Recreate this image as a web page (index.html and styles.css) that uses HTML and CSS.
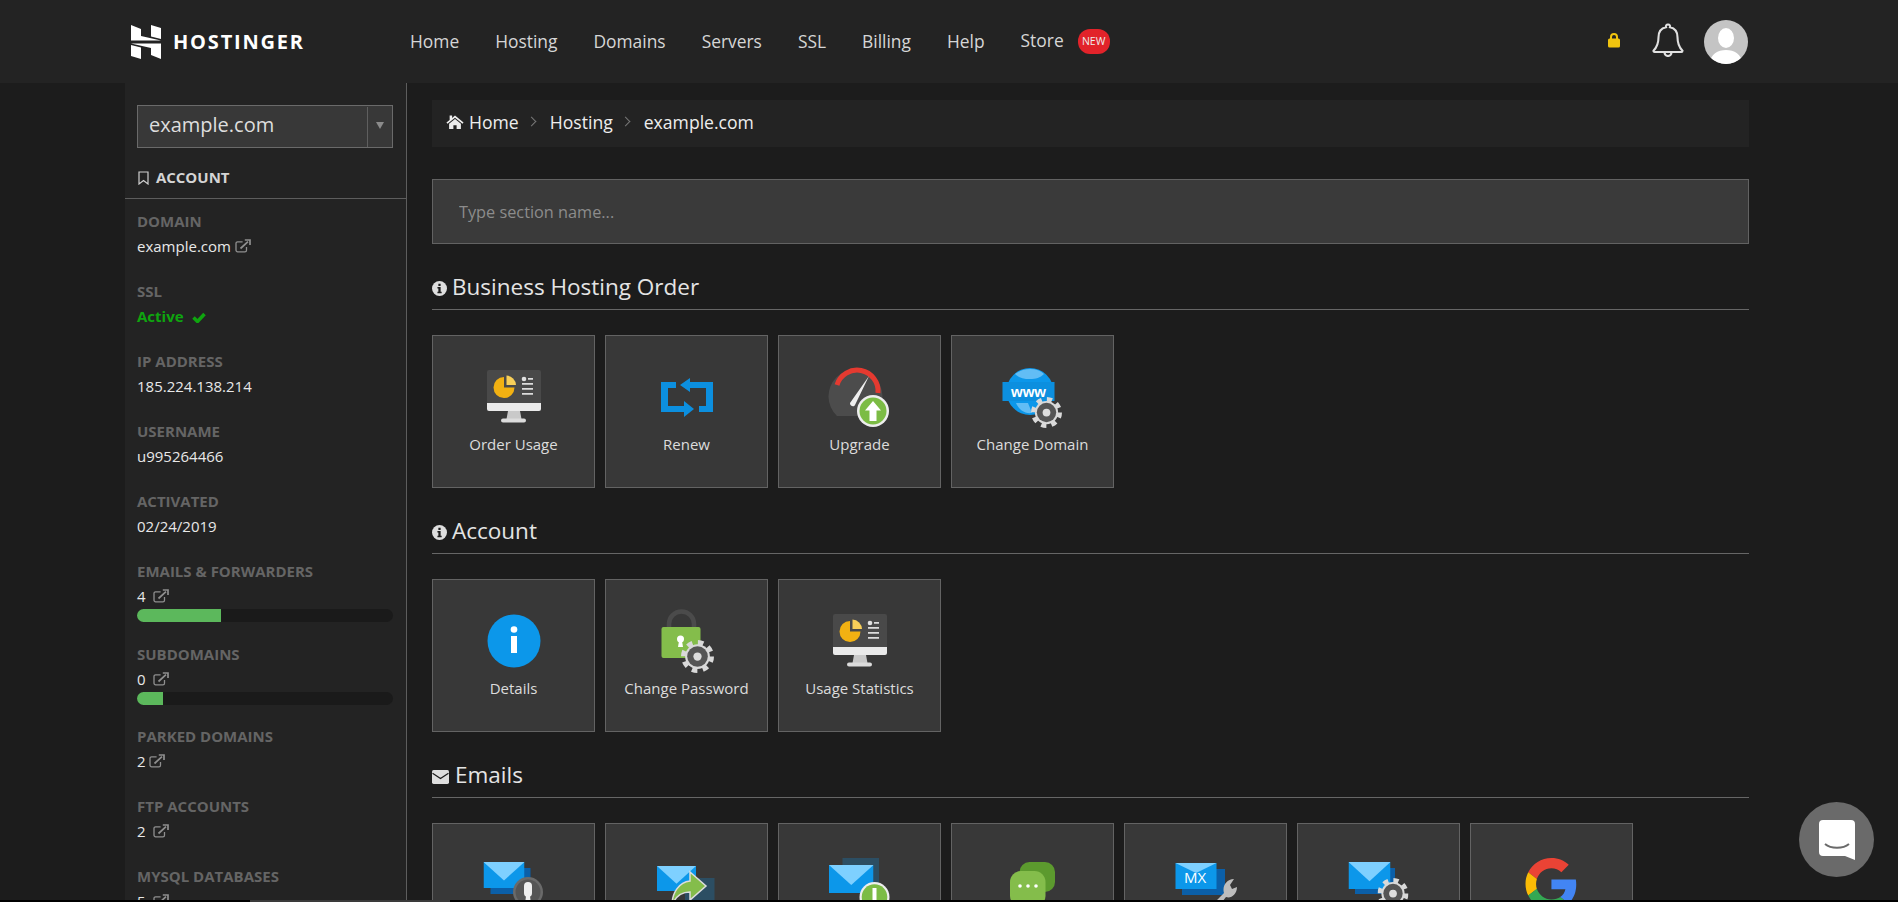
FILE: index.html
```html
<!DOCTYPE html>
<html lang="en">
<head>
  <meta charset="UTF-8">
  <meta name="viewport" content="width=device-width, initial-scale=1.0">
  <title>Hostinger</title>
  <link rel="stylesheet" href="styles.css">
</head>
<body>
  <svg class="defs" width="0" height="0">
    <defs>
      <symbol id="ext" viewBox="0 0 16 14">
        <path d="M11.500 8v3.200a1.600 1.600 0 0 1-1.600 1.600H2.600A1.600 1.600 0 0 1 1 11.200V4.400a1.600 1.600 0 0 1 1.600-1.600h5" fill="none" stroke="currentColor" stroke-width="1.300"/>
        <path d="M5.500 9.500 13 2.600M9.800 1H15v5" fill="none" stroke="currentColor" stroke-width="1.700"/>
      </symbol>
      <symbol id="info" viewBox="0 0 16 16">
        <circle cx="8" cy="8" r="8" fill="#dedede"/>
        <path d="M6.800 3h2.400v2.200H6.800zM5.800 6.500h3.400v5h1.100V13H5.800v-1.500h1V8h-1z" fill="#1c1c1c"/>
      </symbol>
      <symbol id="gear" viewBox="0 0 32 32">
        <circle cx="16" cy="16" r="13.500" fill="none" stroke="#d9d9d9" stroke-width="5" stroke-dasharray="5.300 5.300"/>
        <circle cx="16" cy="16" r="12" fill="#d9d9d9"/>
        <circle cx="16" cy="16" r="10" fill="#555"/>
        <circle cx="16" cy="16" r="4" fill="#dddddd"/>
      </symbol>
      <symbol id="monitor" viewBox="0 0 54 54">
        <path d="M2 0h50a2 2 0 0 1 2 2v32H0V2a2 2 0 0 1 2-2z" fill="#494949"/>
        <path d="M0 33h54v6a2 2 0 0 1-2 2H2a2 2 0 0 1-2-2z" fill="#eaeaea"/>
        <path d="M21 41h12l1.500 8h-15z" fill="#c9c9c9"/>
        <rect x="14" y="48.500" width="25" height="4" rx="2" fill="#dcdcdc"/>
        <path d="M17 7v10.500h10.500A10.500 10.500 0 1 1 17 7z" fill="#f2b112"/>
        <path d="M19.500 5.500a10 10 0 0 1 9.500 9.500h-9.500z" fill="#f8cf59"/>
        <circle cx="37" cy="9" r="2.300" fill="#e0e0e0"/>
        <path d="M41 8h5v1.800h-5zM35 13h11v1.800H35zM35 18h11v1.800H35zM35 23h11v1.800H35z" fill="#dcdcdc"/>
      </symbol>
      <symbol id="mail-front" viewBox="0 0 46 38" preserveAspectRatio="none">
        <rect width="46" height="38" fill="#0c97ea"/>
        <path d="M0 0h46L23 27z" fill="#7ed0ff"/>
      </symbol>
    </defs>
  </svg>

  <header class="topbar">
    <div class="logo">
      <svg class="logo-mark" width="30" height="34" viewBox="0 0 30 34">
        <path d="M0 0 10 4V11L30 15.500H0zM20 0 30 3V14L20 11.500zM30 34 20 30V23L0 18.500H30zM10 34 0 31V20L10 22.500z" fill="#fff"/>
      </svg>
      <span class="logo-text">HOSTINGER</span>
    </div>
    <nav class="nav">
      <a href="#">Home</a>
      <a href="#">Hosting</a>
      <a href="#">Domains</a>
      <a href="#">Servers</a>
      <a href="#">SSL</a>
      <a href="#">Billing</a>
      <a href="#">Help</a>
      <a href="#" class="nav-store"><span class="store-label">Store</span><span class="badge">NEW</span></a>
    </nav>
    <div class="top-right">
      <svg class="lock" width="12" height="15" viewBox="0 0 12 15"><path d="M3 6V4a3 3 0 0 1 6 0v2" fill="none" stroke="#f1c40f" stroke-width="2"/><rect y="5.500" width="12" height="9" rx="1.500" fill="#f1c40f"/></svg>
      <svg class="bell" width="32" height="34" viewBox="0 0 32 34"><path d="M16 1.500a2 2 0 0 1 2 2.800c5 1 7.500 5 7.500 10 0 7 1.500 10 5 13.500 0 .8-.3 1.200-1 1.200H2.500c-.7 0-1-.4-1-1.200 3.500-3.500 5-6.500 5-13.500 0-5 2.500-9 7.500-10a2 2 0 0 1 2-2.800z" fill="none" stroke="#e0e0e0" stroke-width="2.100"/><path d="M12.500 29.500a3.500 3.500 0 0 0 7 0" fill="none" stroke="#e0e0e0" stroke-width="2.100"/></svg>
      <svg class="avatar" width="44" height="44" viewBox="0 0 44 44"><defs><clipPath id="av"><circle cx="22" cy="22" r="22"/></clipPath></defs><g clip-path="url(#av)"><rect width="44" height="44" fill="#c4c4c4"/><ellipse cx="22" cy="18" rx="8" ry="10" fill="#fff"/><path d="M6 44c0-10 8-14 16-14s16 4 16 14z" fill="#fff"/></g></svg>
    </div>
  </header>

  <div class="wrap">
    <aside class="sidebar">
      <div class="select-wrap">
        <div class="domain-select">
          <span class="select-value">example.com</span>
          <span class="select-arrow"></span>
        </div>
      </div>
      <div class="side-title">
        <svg width="11" height="14" viewBox="0 0 11 14"><path d="M1 1h9v12L5.500 9.500 1 13z" fill="none" stroke="#cfcfcf" stroke-width="1.200"/></svg>
        ACCOUNT
      </div>
      <dl class="stats">
        <div class="stat">
          <dt>DOMAIN</dt>
          <dd>example.com <svg class="ext"><use href="#ext"/></svg></dd>
        </div>
        <div class="stat">
          <dt>SSL</dt>
          <dd class="ok">Active <svg class="check" width="14" height="11" viewBox="0 0 14 11"><path d="M1.500 5.500l4 4 7-7.500" fill="none" stroke="#0fa50f" stroke-width="3.500"/></svg></dd>
        </div>
        <div class="stat">
          <dt>IP ADDRESS</dt>
          <dd>185.224.138.214</dd>
        </div>
        <div class="stat">
          <dt>USERNAME</dt>
          <dd>u995264466</dd>
        </div>
        <div class="stat">
          <dt>ACTIVATED</dt>
          <dd>02/24/2019</dd>
        </div>
        <div class="stat stat-bar">
          <dt>EMAILS &amp; FORWARDERS</dt>
          <dd>4 <svg class="ext ext-far"><use href="#ext"/></svg></dd>
          <div class="bar"><div class="bar-fill" style="width: 33%"></div></div>
        </div>
        <div class="stat stat-bar">
          <dt>SUBDOMAINS</dt>
          <dd>0 <svg class="ext ext-far"><use href="#ext"/></svg></dd>
          <div class="bar"><div class="bar-fill" style="width: 10%"></div></div>
        </div>
        <div class="stat">
          <dt>PARKED DOMAINS</dt>
          <dd>2 <svg class="ext"><use href="#ext"/></svg></dd>
        </div>
        <div class="stat">
          <dt>FTP ACCOUNTS</dt>
          <dd>2 <svg class="ext ext-far"><use href="#ext"/></svg></dd>
        </div>
        <div class="stat">
          <dt>MYSQL DATABASES</dt>
          <dd>5 <svg class="ext ext-far"><use href="#ext"/></svg></dd>
        </div>
      </dl>
    </aside>

    <main class="content">
      <div class="crumbs">
        <svg width="18" height="15" viewBox="0 0 16 14"><path d="M8 1.500l8 6.500-1 1.200L8 3.500 1 9.200 0 8l3-2.400V1.500h2.300v2.200z" fill="#eee"/><path d="M2.500 9L8 4.600 13.500 9v5H9.500v-3.500h-3V14h-4z" fill="#eee"/></svg>
        <a href="#">Home</a>
        <span class="sep"></span>
        <a href="#">Hosting</a>
        <span class="sep"></span>
        <a href="#">example.com</a>
      </div>

      <input class="search" type="text" placeholder="Type section name...">

      <section class="group">
        <h2><svg class="head-icon"><use href="#info"/></svg>Business Hosting Order</h2>
        <div class="tiles">
          <a class="tile" href="#">
            <svg class="ico" viewBox="0 0 64 64"><use href="#monitor" x="5" y="5" width="54" height="54"/></svg>
            <span>Order Usage</span>
          </a>
          <a class="tile" href="#">
            <svg class="ico" viewBox="0 0 64 64"><path d="M6 17H21V23H13V41H29V36L39 44L29 52V47H6Z" fill="#0c8fdf"/><path d="M58 47H44V41H51V23H35V27L25 20L35 13V17H58Z" fill="#0c8fdf"/></svg>
            <span>Renew</span>
          </a>
          <a class="tile" href="#">
            <svg class="ico" viewBox="0 0 64 64"><path d="M9 51A27 27 0 1 1 46 51Z" fill="#4c4c4c"/><path d="M9 20A21 21 0 0 1 50 28" fill="none" stroke="#e53a30" stroke-width="5"/><path d="M41 11 27 40c-1 2.500-5.500 1-5-2z" fill="#eee"/><circle cx="45" cy="46" r="16" fill="#eee"/><circle cx="45" cy="46" r="13.500" fill="#7cbc45"/><path d="M45 36l8 9.500h-4.500V56h-7V45.500H37z" fill="#fff"/></svg>
            <span>Upgrade</span>
          </a>
          <a class="tile" href="#">
            <svg class="ico" viewBox="0 0 64 64"><circle cx="29" cy="26.500" r="23.500" fill="#0c97ea"/><path d="M14 9c8-6 22-7 29 0-4 4-8 5-14 5s-11-1-15-5zM15 38h12l4 10c-7 1-13-3-16-10z" fill="#62bdf5"/><rect x="1.500" y="17" width="52" height="19" fill="#0c8fdf"/><text x="27.500" y="31.500" class="ico-www">www</text><use href="#gear" x="30" y="32" width="31" height="31"/></svg>
            <span>Change Domain</span>
          </a>
        </div>
      </section>

      <section class="group">
        <h2><svg class="head-icon"><use href="#info"/></svg>Account</h2>
        <div class="tiles">
          <a class="tile" href="#">
            <svg class="ico" viewBox="0 0 64 64"><circle cx="32" cy="32" r="26.500" fill="#0c97ea"/><circle cx="32" cy="20.500" r="3.300" fill="#fff"/><rect x="29" y="27" width="6" height="17" fill="#fff"/></svg>
            <span>Details</span>
          </a>
          <a class="tile" href="#">
            <svg class="ico" viewBox="0 0 64 64"><path d="M14 20V15a12.500 12.500 0 0 1 25 0v5" fill="none" stroke="#4b4b4b" stroke-width="4.500"/><rect x="6.500" y="18" width="39" height="31" rx="2" fill="#84bd4b"/><circle cx="25.500" cy="30" r="3.500" fill="#fff"/><path d="M24 32h3l1 6h-5z" fill="#fff"/><use href="#gear" x="26" y="31" width="33" height="33"/></svg>
            <span>Change Password</span>
          </a>
          <a class="tile" href="#">
            <svg class="ico" viewBox="0 0 64 64"><use href="#monitor" x="5" y="5" width="54" height="54"/></svg>
            <span>Usage Statistics</span>
          </a>
        </div>
      </section>

      <section class="group">
        <h2><svg class="head-mail" viewBox="0 0 16 13"><rect width="16" height="13" rx="1.500" fill="#dedede"/><path d="M.5 3 8 8l7.500-5" fill="none" stroke="#1c1c1c" stroke-width="1.200"/></svg>Emails</h2>
        <div class="tiles">
          <a class="tile" href="#">
            <svg class="ico" viewBox="0 0 64 64"><rect x="8.500" y="15" width="40" height="26" fill="#0b5fa8"/><use href="#mail-front" x="1.500" y="9" width="41" height="26"/><circle cx="46" cy="39" r="15" fill="#6a6a6a"/><circle cx="46" cy="39" r="12.500" fill="#555"/><rect x="42" y="29" width="8" height="15" rx="4" fill="#eee"/><path d="M44 43h4l1.500 12h-7z" fill="#eee"/></svg>
          </a>
          <a class="tile" href="#">
            <svg class="ico" viewBox="0 0 64 64"><rect x="30" y="25" width="29.500" height="30" fill="#2c4e63"/><use href="#mail-front" x="2" y="13" width="39" height="25"/><path d="M35 19 51 33 35 47V39C27 39 21 42 17 52 17 40 24 29 35 28Z" fill="#84bd4b" stroke="#dddddd" stroke-width="1.500"/></svg>
          </a>
          <a class="tile" href="#">
            <svg class="ico" viewBox="0 0 64 64"><rect x="14.500" y="5" width="36.500" height="30" fill="#2c4e63"/><use href="#mail-front" x="1" y="12" width="44.500" height="28"/><circle cx="46.500" cy="44" r="15" fill="#eee"/><circle cx="46.500" cy="44" r="12.800" fill="#7cbc45"/><rect x="44.500" y="35" width="4" height="22" fill="#fff"/></svg>
          </a>
          <a class="tile" href="#">
            <svg class="ico" viewBox="0 0 64 64"><rect x="18.500" y="9" width="35.500" height="30" rx="10" fill="#5c9a2e"/><rect x="9" y="18" width="35.500" height="36" rx="11" fill="#84bd4b"/><circle cx="19" cy="33" r="1.800" fill="#fff"/><circle cx="27" cy="33" r="1.800" fill="#fff"/><circle cx="35" cy="33" r="1.800" fill="#fff"/></svg>
          </a>
          <a class="tile" href="#">
            <svg class="ico" viewBox="0 0 64 64"><rect x="8" y="16" width="43" height="26" fill="#0b5fa8"/><rect x="1.500" y="10" width="41" height="26" fill="#0c97ea"/><path d="M1.500 10h41L22 20z" fill="#7ed0ff"/><text x="21" y="30" class="ico-mx">MX</text><path d="M30 60l20-20c-2-6 2-14 10-14l-4 6 2 4 5-2c0 7-6 12-11 10L36 64z" fill="#bdbdbd"/></svg>
          </a>
          <a class="tile" href="#">
            <svg class="ico" viewBox="0 0 64 64"><rect x="8" y="15" width="40" height="26" fill="#0b5fa8"/><use href="#mail-front" x="1.500" y="9" width="42" height="27"/><use href="#gear" x="30.500" y="25" width="31" height="31"/></svg>
          </a>
          <a class="tile" href="#">
            <svg class="ico" viewBox="0 0 64 64"><g transform="translate(5.500 5) scale(1.080)"><path d="M24 9.500c3.540 0 6.710 1.220 9.210 3.600l6.850-6.850C35.900 2.380 30.470 0 24 0 14.620 0 6.510 5.380 2.560 13.220l7.980 6.190C12.430 13.720 17.740 9.500 24 9.500z" fill="#ea4335"/><path d="M46.980 24.550c0-1.570-.15-3.090-.38-4.550H24v9.020h12.940c-.58 2.960-2.260 5.480-4.780 7.180l7.730 6c4.510-4.180 7.090-10.360 7.090-17.650z" fill="#4285f4"/><path d="M10.530 28.590c-.48-1.450-.76-2.990-.76-4.590s.27-3.140.76-4.590l-7.980-6.190C.92 16.460 0 20.120 0 24c0 3.880.92 7.540 2.560 10.780l7.970-6.190z" fill="#fbbc05"/><path d="M24 48c6.480 0 11.930-2.130 16.030-5.810l-7.730-6c-2.150 1.450-4.920 2.300-8.300 2.300-6.260 0-11.570-4.220-13.470-9.910l-7.980 6.190C6.510 42.620 14.620 48 24 48z" fill="#34a853"/></g></svg>
          </a>
        </div>
      </section>
    </main>
  </div>

  <button class="chat" type="button">
    <svg width="36" height="40" viewBox="0 0 36 40"><path d="M4 0h28a4 4 0 0 1 4 4v36l-10-4H4a4 4 0 0 1-4-4V4a4 4 0 0 1 4-4z" fill="#fff"/><path d="M6 24c6 5 18 5 24 0" fill="none" stroke="#6a6a6a" stroke-width="2"/></svg>
  </button>
  <div class="bottom-strip"><span class="strip-thumb"></span></div>
</body>
</html>
```

FILE: styles.css
```css
html, body {
  height: 100%;
}
body {
  margin: 0;
  height: 902px;
  overflow: hidden;
  background-color: #1c1c1c;
  color: #eeeeee;
  font-family: "Open Sans", Arial, sans-serif;
  font-size: 14px;
}
a {
  color: inherit;
  text-decoration: none;
}
.defs {
  display: block;
  height: 0;
}

/* top bar */
.topbar {
  height: 83px;
  background-color: #232323;
  display: flex;
  align-items: center;
  padding: 0 150px 0 131px;
  box-sizing: border-box;
}
.logo {
  width: 279px;
  display: flex;
  align-items: center;
  gap: 12px;
}
.logo-text {
  color: #ffffff;
  font-weight: 700;
  font-size: 20px;
  letter-spacing: 1.800px;
}
.nav {
  display: flex;
  align-items: center;
  gap: 36px;
  font-size: 17.400px;
  color: #d6d6d6;
  padding-bottom: 2px;
}
.nav-store {
  display: flex;
  align-items: center;
}
.store-label {
  margin-bottom: 2px;
}
.badge {
  background-color: #e2232a;
  color: #eeeeee;
  font-size: 10.500px;
  width: 32px;
  height: 25px;
  line-height: 25px;
  border-radius: 12px;
  text-align: center;
  margin-left: 14px;
  margin-top: 2px;
}
.top-right {
  margin-left: auto;
  display: flex;
  align-items: center;
}
.lock {
  margin-bottom: 2px;
}
.bell {
  margin-left: 32px;
  margin-right: 20px;
  margin-bottom: 4px;
}

/* sidebar */
.wrap {
  display: flex;
  padding-left: 125px;
  height: 819px;
}
.sidebar {
  width: 281px;
  background-color: #232323;
  border-right: 1px solid #5d5d5d;
  flex-shrink: 0;
  overflow: hidden;
}
.select-wrap {
  padding: 22px 13px 0 12px;
}
.domain-select {
  height: 43px;
  box-sizing: border-box;
  background-color: #383838;
  border: 1px solid #6a6a6a;
  display: flex;
  align-items: center;
  justify-content: space-between;
  font-size: 20px;
  color: #dedede;
  padding-left: 11px;
}
.select-value {
  margin-bottom: 5px;
}
.select-arrow {
  width: 24px;
  height: 40px;
  border-left: 1px solid #5f5f5f;
  position: relative;
}
.select-arrow::after {
  content: "";
  position: absolute;
  left: 8px;
  top: 15px;
  border: 4px solid transparent;
  border-top: 7px solid #8b8b8b;
}
.side-title {
  height: 51px;
  box-sizing: border-box;
  padding: 19px 0 0 13px;
  border-bottom: 1px solid #5d5d5d;
  font-weight: 700;
  font-size: 15px;
  color: #d4d4d4;
}
.side-title svg {
  vertical-align: -2px;
  margin-right: 3px;
}
.stats {
  margin: 0;
  padding: 10px 0 0 12px;
  width: 256px;
}
.stat {
  height: 70px;
}
.stat-bar {
  height: 82.500px;
}
.stat dt {
  color: #656565;
  font-weight: 700;
  font-size: 15px;
  line-height: 24px;
}
.stat dd {
  margin: 1px 0 0;
  font-size: 15px;
  line-height: 24px;
  color: #e8e8e8;
}
.stat dd.ok {
  color: #0fa50f;
  font-weight: 700;
}
.ext {
  width: 16px;
  height: 14px;
  color: #8f8f8f;
  vertical-align: -1px;
}
.ext-far {
  margin-left: 4px;
}
.check {
  margin-left: 5px;
  vertical-align: -1px;
}
.bar {
  height: 13px;
  margin-top: 1px;
  background-color: #1a1a1a;
  border-radius: 7px;
  overflow: hidden;
}
.bar-fill {
  height: 100%;
  background-color: #5cb85c;
}

/* main */
.content {
  flex: 1;
  padding: 17px 149px 0 25px;
  min-width: 0;
  overflow: hidden;
}
.crumbs {
  height: 47px;
  box-sizing: border-box;
  padding: 0 0 4px 14px;
  background-color: #232323;
  display: flex;
  align-items: center;
  font-size: 17.600px;
  color: #eeeeee;
}
.crumbs svg {
  margin-right: 5px;
}
.sep {
  width: 6px;
  height: 6px;
  border-top: 1px solid #777777;
  border-right: 1px solid #777777;
  transform: rotate(45deg);
  margin: 0 15px 0 9px;
}
.search {
  display: block;
  width: 100%;
  height: 65px;
  box-sizing: border-box;
  margin-top: 32px;
  padding: 0 26px;
  background-color: #3a3a3a;
  border: 1px solid #626262;
  font-family: inherit;
  font-size: 16.300px;
  color: #dddddd;
}
.search::placeholder {
  color: #8c8c8c;
  opacity: 1;
}
.group h2 {
  margin: 0;
  height: 66px;
  padding-top: 21px;
  box-sizing: border-box;
  border-bottom: 1px solid #666666;
  font-size: 22.500px;
  font-weight: 400;
  line-height: 32px;
  color: #e4e4e4;
  display: flex;
  align-items: center;
}
.head-icon {
  width: 15px;
  height: 15px;
  margin: 3px 5px 0 0;
}
.head-mail {
  width: 17px;
  height: 14px;
  margin: 4px 6px 0 0;
}
.tiles {
  display: flex;
  gap: 10px;
  margin-top: 25px;
}
.tile {
  width: 163px;
  height: 153px;
  box-sizing: border-box;
  background-color: #383838;
  border: 1px solid #636363;
  display: flex;
  flex-direction: column;
  align-items: center;
  padding-top: 29px;
  font-size: 15px;
  color: #dcdcdc;
}
.ico {
  width: 64px;
  height: 64px;
  margin-bottom: 5px;
  flex-shrink: 0;
}
.ico-www {
  fill: #ffffff;
  font-family: "Liberation Sans", Arial, sans-serif;
  font-weight: 700;
  font-size: 15px;
  text-anchor: middle;
}
.ico-mx {
  fill: #ffffff;
  font-family: "Open Sans", Arial, sans-serif;
  font-size: 15px;
  text-anchor: middle;
}

/* things lying over the page */
.chat {
  position: fixed;
  right: 24px;
  bottom: 25px;
  width: 75px;
  height: 75px;
  border: 0;
  padding: 0;
  border-radius: 50%;
  background-color: #6a6a6a;
  display: flex;
  align-items: center;
  justify-content: center;
}
.bottom-strip {
  position: fixed;
  left: 0;
  right: 0;
  bottom: 0;
  height: 2px;
  background-color: #000000;
}
.strip-thumb {
  display: block;
  width: 200px;
  height: 2px;
  margin-left: 250px;
  background-color: #3a3a3a;
}
```
